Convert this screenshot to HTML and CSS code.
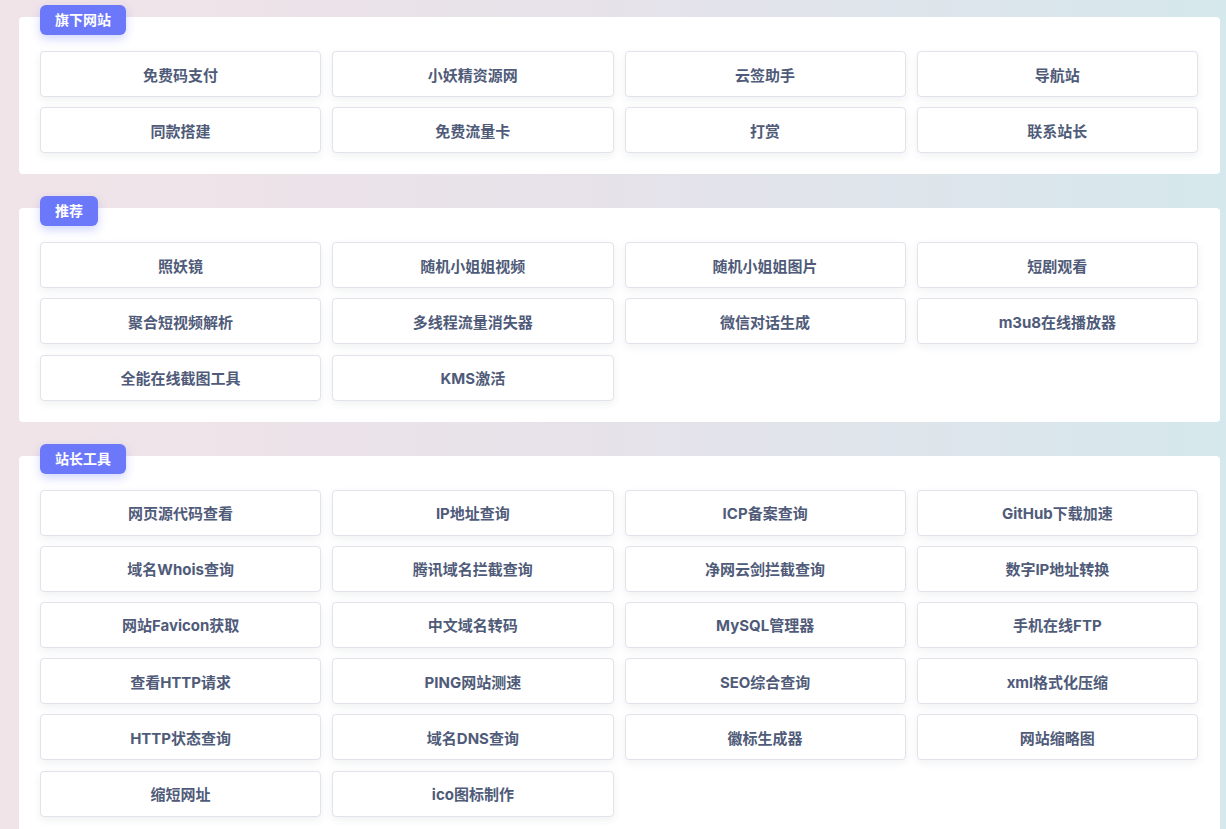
FILE: index.html
```html
<!DOCTYPE html>
<html>
<head>
    <title>导航</title>
    <meta http-equiv="content-type" content="text/html; charset=UTF-8"/>
    <link rel="stylesheet" href="styles.css">
</head>
<body>
<div class="page">
    <div class="panel">
        <span class="panel_title">旗下网站</span>
        <div class="links">
            <a class="link">免费码支付</a>
            <a class="link">小妖精资源网</a>
            <a class="link">云签助手</a>
            <a class="link">导航站</a>
            <a class="link">同款搭建</a>
            <a class="link">免费流量卡</a>
            <a class="link">打赏</a>
            <a class="link">联系站长</a>
        </div>
    </div>
    <div class="panel">
        <span class="panel_title">推荐</span>
        <div class="links">
            <a class="link">照妖镜</a>
            <a class="link">随机小姐姐视频</a>
            <a class="link">随机小姐姐图片</a>
            <a class="link">短剧观看</a>
            <a class="link">聚合短视频解析</a>
            <a class="link">多线程流量消失器</a>
            <a class="link">微信对话生成</a>
            <a class="link">m3u8在线播放器</a>
            <a class="link">全能在线截图工具</a>
            <a class="link">KMS激活</a>
        </div>
    </div>
    <div class="panel">
        <span class="panel_title">站长工具</span>
        <div class="links">
            <a class="link">网页源代码查看</a>
            <a class="link">IP地址查询</a>
            <a class="link">ICP备案查询</a>
            <a class="link">GitHub下载加速</a>
            <a class="link">域名Whois查询</a>
            <a class="link">腾讯域名拦截查询</a>
            <a class="link">净网云剑拦截查询</a>
            <a class="link">数字IP地址转换</a>
            <a class="link">网站Favicon获取</a>
            <a class="link">中文域名转码</a>
            <a class="link">MySQL管理器</a>
            <a class="link">手机在线FTP</a>
            <a class="link">查看HTTP请求</a>
            <a class="link">PING网站测速</a>
            <a class="link">SEO综合查询</a>
            <a class="link">xml格式化压缩</a>
            <a class="link">HTTP状态查询</a>
            <a class="link">域名DNS查询</a>
            <a class="link">徽标生成器</a>
            <a class="link">网站缩略图</a>
            <a class="link">缩短网址</a>
            <a class="link">ico图标制作</a>
        </div>
    </div>
</div>
</body>
</html>
```

FILE: styles.css
```css
html {
    min-height: 100%;
    background: linear-gradient(90deg, #f1e4e8 0%, #e6e2ea 50%, #d5e8ec 100%);
}

body {
    margin: 0;
    font-family: Inter, "Noto Sans CJK SC", sans-serif;
    color: #4f5b79;
}

.page {
    display: flex;
    flex-direction: column;
    gap: 34px;
    padding: 17px 6px 0 19px;
}

.panel {
    position: relative;
    background-color: #fff;
    border-radius: 4px;
    padding: 34px 22px 21px 21px;
}

.panel_title {
    position: absolute; /* sits over the top edge of the panel */
    top: -12px;
    left: 21px;
    height: 30px;
    line-height: 30px;
    padding: 0 15px;
    border-radius: 6px;
    background-color: #6b78fa;
    color: #fff;
    font-size: 14px;
    font-weight: bold;
    box-shadow: 0 4px 10px rgba(107, 120, 250, 0.3);
}

.links {
    display: grid;
    grid-template-columns: repeat(4, 1fr);
    column-gap: 11px;
    row-gap: 10.2px;
}

.link {
    display: flex;
    align-items: center;
    justify-content: center;
    height: 46px;
    box-sizing: border-box;
    border: 1px solid #e1e3ec;
    border-radius: 4px;
    background-color: #fff;
    box-shadow: 0 3px 8px rgba(40, 50, 90, 0.07);
    font-size: 15px;
    font-weight: bold;
    cursor: pointer;
}
```
